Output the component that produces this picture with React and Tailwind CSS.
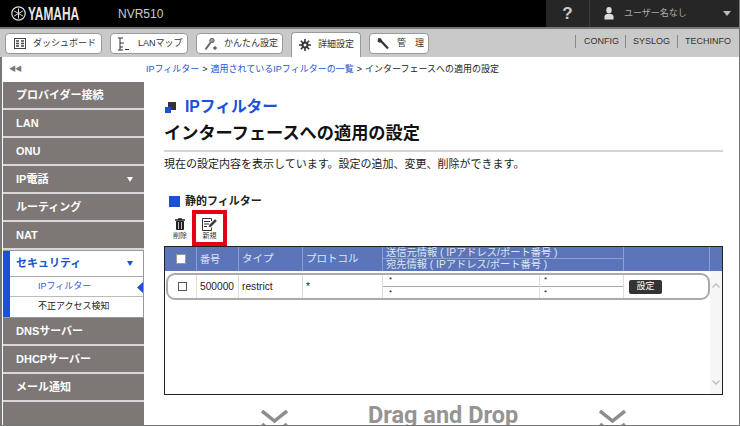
import React from "react";

const F = { fontFamily: '"Liberation Sans","Noto Sans CJK JP",sans-serif' };

function Tab({ icon, label, w, active }) {
  return (
    <div
      className={`flex items-center border border-[#999] rounded-[4px] shrink-0 ${active ? "h-[25px] mt-[3px] rounded-b-none border-b-0 bg-white" : "h-[21px] mt-[4px] bg-white"} ${w}`}
    >
      {icon}
      <span className="text-[9px] text-[#333] whitespace-pre">{label}</span>
    </div>
  );
}

function Nav({ label, arrow }) {
  return (
    <div className="h-[28px] bg-[#7d7775] border-b-2 border-[#d8d6d6] flex items-center pl-[13px] pr-[11px] justify-between shrink-0">
      <span className="text-[11px] font-bold text-white">{label}</span>
      {arrow && <span className="w-0 h-0 border-x-[3px] border-x-transparent border-t-[5px] border-t-white" />}
    </div>
  );
}

function Chevrons({ cls }) {
  return (
    <svg width="27" height="22" viewBox="0 0 27 22" className={`shrink-0 ${cls}`} fill="none" stroke="#8c8c8c" strokeWidth="3.500">
      <path d="M1 1l12.500 10L26 1" />
      <path d="M1 14l12.500 10L26 14" />
    </svg>
  );
}

export default function App() {
  return (
    <div style={F} className="w-[740px] h-[426px] overflow-hidden bg-white flex flex-col border-r border-b border-[#777]">
      {/* top bar */}
      <div className="h-[27px] bg-black flex items-center shrink-0">
        <svg width="15" height="15" viewBox="0 0 15 15" className="ml-[11px] shrink-0" fill="none" stroke="#ddd">
          <circle cx="7.500" cy="7.500" r="6.700" strokeWidth="1.200" />
          <path d="M7.500 2.500v10M3.200 5l8.600 5M11.800 5l-8.600 5" strokeWidth="1" />
        </svg>
        <span className="w-[90px] ml-[2px] shrink-0 block">
          <span className="block text-[18px] leading-[20px] font-bold text-[#e6e6e6] scale-x-[0.66] origin-left">YAMAHA</span>
        </span>
        <span className="text-[12px] text-[#ccc]">NVR510</span>
        <div className="flex-1" />
        <div className="w-[44px] h-full bg-[#262626] flex items-center justify-center border-r border-[#3c3c3c] shrink-0">
          <span className="text-[17px] font-bold text-[#ccc]">?</span>
        </div>
        <div className="w-[149px] h-full bg-[#262626] flex items-center pl-[14px] shrink-0">
          <svg width="10" height="13" viewBox="0 0 10 13" fill="#ddd" className="shrink-0">
            <ellipse cx="5" cy="3.200" rx="2.700" ry="3.200" />
            <path d="M0.500 12.500V9Q1 7.300 3 7h4Q9 7.300 9.500 9v3.500z" />
          </svg>
          <span className="text-[9px] text-[#aaa] ml-[10px] whitespace-nowrap">ユーザー名なし</span>
          <span className="ml-[36px] w-0 h-0 border-x-[4px] border-x-transparent border-t-[5px] border-t-[#bbb]" />
        </div>
      </div>
      <div className="h-[2px] bg-[#777] shrink-0" />
      {/* tab bar */}
      <div className="h-[28px] bg-[#c9c9c9] flex items-start pl-[5px] gap-[8px] shrink-0">
        <Tab
          w="w-[97px]"
          label="ダッシュボード"
          icon={
            <svg width="12" height="11" viewBox="0 0 12 11" className="ml-[8px] mr-[7px]" fill="none" stroke="#444">
              <rect x="0.500" y="0.500" width="11" height="10" />
              <path d="M2 3h3M7 3h3M2 5.500h3M7 5.500h3M2 8h3M7 8h3" strokeWidth="1.300" />
            </svg>
          }
        />
        <Tab
          w="w-[78px]"
          label="LANマップ"
          icon={
            <svg width="12" height="14" viewBox="0 0 12 14" className="ml-[6px] mr-[9px]" fill="none" stroke="#333">
              <path d="M1 1h5M3 1v12M1 13h5M3 6h4M3 10h3M8 12.500h4" />
            </svg>
          }
        />
        <Tab
          w="w-[87px]"
          label="かんたん設定"
          icon={
            <svg width="14" height="14" viewBox="0 0 14 14" className="ml-[7px] mr-[6px]" fill="none" stroke="#666">
              <circle cx="8" cy="3.500" r="2.200" fill="#999" />
              <path d="M6.500 5.500L1.500 12.500" strokeWidth="2" />
              <path d="M9 11h4M11 9v4" stroke="#333" />
            </svg>
          }
        />
        <Tab
          w="w-[70px]"
          active
          label="詳細設定"
          icon={
            <svg width="12" height="12" viewBox="0 0 12 12" className="ml-[7px] mr-[7px]" fill="none" stroke="#333">
              <circle cx="6" cy="6" r="2.500" strokeWidth="2" />
              <path d="M6 0v3M6 9v3M0 6h3M9 6h3M1.800 1.800l2 2M8.200 8.200l2 2M10.200 1.800l-2 2M3.800 8.200l-2 2" strokeWidth="1.600" />
            </svg>
          }
        />
        <Tab
          w="w-[60px]"
          label="管　理"
          icon={
            <svg width="12" height="13" viewBox="0 0 12 13" className="ml-[7px] mr-[8px]" fill="none" stroke="#333">
              <path d="M1.500 1.500l2.200 0.300 0.800 2.200-1.300 1.300-2.200-0.800z" fill="#333" />
              <path d="M3.500 3.500L11 11.500" strokeWidth="2.200" />
            </svg>
          }
        />
        <div className="flex-1" />
        <div className="flex items-center h-[11px] mt-[7px] text-[9px] text-[#333] mr-[8px]">
          <span className="border-l border-[#888] pl-[8px] pr-[6px]">CONFIG</span>
          <span className="border-l border-[#888] pl-[7px] pr-[7px]">SYSLOG</span>
          <span className="border-l border-[#888] pl-[7px]">TECHINFO</span>
        </div>
      </div>
      {/* body */}
      <div className="flex flex-1 min-h-0 border-l-2 border-[#777]">
        {/* sidebar */}
        <div className="w-[141px] ml-[1px] flex flex-col shrink-0">
          <div className="h-[25px] pl-[6px] flex items-center text-[7px] text-[#777] tracking-[-1px] shrink-0">◀◀</div>
          <Nav label="プロバイダー接続" />
          <Nav label="LAN" />
          <Nav label="ONU" />
          <Nav label="IP電話" arrow />
          <Nav label="ルーティング" />
          <Nav label="NAT" />
          <div className="h-[68px] flex shrink-0 border-t border-b border-[#999] relative">
            <div className="w-[7px] bg-[#1b50d9]" />
            <div className="flex-1 flex flex-col">
              <div className="h-[26px] flex items-center justify-between pl-[6px] pr-[11px] border-b border-[#aaa]">
                <span className="text-[11px] font-bold text-[#1b50d9]">セキュリティ</span>
                <span className="w-0 h-0 border-x-[3px] border-x-transparent border-t-[5px] border-t-[#1b50d9]" />
              </div>
              <div className="h-[20px] flex items-center pl-[28px] text-[9px] text-[#2a5fd0] border-b border-[#bbb]">IPフィルター</div>
              <div className="h-[19px] flex items-center pl-[28px] text-[9px] text-[#222]">不正アクセス検知</div>
            </div>
            <div className="absolute right-0 top-[30px] w-[7px] h-[13px] bg-[#1b50d9] [clip-path:polygon(100%_0,100%_100%,0_50%)]" />
            <div className="absolute right-0 top-0 bottom-0 w-px bg-[#999]" />
          </div>
          <Nav label="DNSサーバー" />
          <Nav label="DHCPサーバー" />
          <Nav label="メール通知" />
          <div className="flex-1 bg-[#7d7775]" />
        </div>
        {/* main */}
        <div className="flex-1 min-w-0 flex flex-col">
          <div className="h-[26px] flex items-center pl-[2px] text-[9px] text-[#222] shrink-0 whitespace-nowrap">
            <span className="text-[#1b50d9]">IPフィルター</span>
            <span className="mx-[3px]">&gt;</span>
            <span className="text-[#1b50d9]">適用されているIPフィルターの一覧</span>
            <span className="mx-[3px]">&gt;</span>
            <span>インターフェースへの適用の設定</span>
          </div>
          <div className="pl-[20px] pr-[16px] flex flex-col flex-1 min-h-0">
            <div className="flex items-center h-[20px] mt-[14px] shrink-0">
              <span className="relative block w-[11px] h-[11px] ml-[1px]">
                <span className="absolute right-0 top-0 w-[8px] h-[8px] bg-[#333]" />
                <span className="absolute left-0 bottom-0 w-[6px] h-[6px] bg-[#1b50d9]" />
              </span>
              <span className="text-[15.700px] font-bold text-[#1b50d9] ml-[9px]">IPフィルター</span>
            </div>
            <div className="text-[17.200px] font-bold text-[#111] h-[25px] mt-[4px] leading-[25px] whitespace-nowrap shrink-0">インターフェースへの適用の設定</div>
            <div className="h-[2px] bg-[#d4d4d4] mt-[4px] shrink-0" />
            <div className="text-[11px] text-[#222] mt-[4px] h-[16px] leading-[16px] whitespace-nowrap shrink-0">現在の設定内容を表示しています。設定の追加、変更、削除ができます。</div>
            <div className="flex items-center h-[16px] mt-[21px] pl-[5px] shrink-0">
              <span className="w-[11px] h-[11px] bg-[#1b50d9]" />
              <span className="text-[11px] font-bold text-[#222] ml-[5px]">静的フィルター</span>
            </div>
            <div className="flex h-[36px] mt-[1px] pl-[4px] items-stretch shrink-0">
              <div className="w-[24px] flex flex-col items-center pt-[8px]">
                <svg width="10" height="12" viewBox="0 0 10 12" fill="none" stroke="#222">
                  <path d="M0 2h10M3 1h4" strokeWidth="1.500" />
                  <path d="M1.500 3.500h7V11.500h-7z" fill="#222" />
                  <path d="M3.500 4v7M6.500 4v7" stroke="#fff" strokeWidth="0.700" />
                </svg>
                <span className="text-[7px] leading-[10px] mt-[1px] text-[#333]">削除</span>
              </div>
              <div className="w-[35px] border-[4px] border-[#e60012] flex flex-col items-center pt-[4px]">
                <svg width="15" height="13" viewBox="0 0 15 13" className="shrink-0" fill="none" stroke="#333">
                  <path d="M9.500 9.500v3h-9v-12h9v2.500M2 3.500h6M2 6h5M2 8.500h3" />
                  <path d="M7 9l.500-2 5.500-5.500 1.500 1.500L9 8.500z" fill="#333" strokeWidth="0.500" />
                </svg>
                <span className="text-[7px] leading-[10px] text-[#333]">新規</span>
              </div>
            </div>
            {/* table */}
            <div className="h-[149px] shrink-0 border border-[#222] bg-white flex flex-col">
              <div className="h-[24px] bg-[#5b75b8] flex text-[#dfe5f5] text-[10.500px] shrink-0">
                <div className="w-[32px] border-r border-[#8da0d0] flex items-center justify-center pl-[1px]">
                  <span className="block w-[10px] h-[10px] bg-white border border-[#999]" />
                </div>
                <div className="w-[42px] border-r border-[#8da0d0] flex items-center pl-[3px] text-[10px]">番号</div>
                <div className="w-[64px] border-r border-[#8da0d0] flex items-center pl-[3px]">タイプ</div>
                <div className="w-[80px] border-r border-[#8da0d0] flex items-center pl-[3px]">プロトコル</div>
                <div className="w-[241px] border-r border-[#8da0d0] flex flex-col text-[10.250px] whitespace-nowrap leading-[11px]">
                  <div className="h-[11px] pl-[3px]">送信元情報 ( IPアドレス/ポート番号 )</div>
                  <div className="h-px bg-[#8da0d0] shrink-0" />
                  <div className="h-[12px] pl-[3px]">宛先情報 ( IPアドレス/ポート番号 )</div>
                </div>
                <div className="w-[86px] border-r border-[#8da0d0]" />
                <div className="flex-1" />
              </div>
              <div className="flex-1 flex min-h-0">
                <div className="flex-1 pt-[2px] pl-[1px]">
                  <div className="h-[27px] w-[544px] border-2 border-[#aaa] rounded-[9px] flex text-[10.200px] text-[#222] bg-white">
                    <div className="w-[29px] border-r border-[#ddd] flex items-center justify-center pl-[1px]">
                      <span className="block w-[9px] h-[9px] border border-[#555]" />
                    </div>
                    <div className="w-[42px] border-r border-[#ddd] flex items-center pl-[3px]">500000</div>
                    <div className="w-[64px] border-r border-[#ddd] flex items-center pl-[3px]">restrict</div>
                    <div className="w-[80px] border-r border-[#ddd] flex items-center pl-[3px]">*</div>
                    <div className="w-[157px] border-r border-[#ddd] flex flex-col">
                      <div className="h-[12px] border-b border-[#aaa] pl-[6px] text-[8px] leading-[10px]">*</div>
                      <div className="flex-1 pl-[6px] text-[8px] leading-[11px]">*</div>
                    </div>
                    <div className="w-[84px] border-r border-[#ddd] flex flex-col">
                      <div className="h-[12px] border-b border-[#aaa] pl-[4px] text-[8px] leading-[10px]">*</div>
                      <div className="flex-1 pl-[4px] text-[8px] leading-[11px]">*</div>
                    </div>
                    <div className="flex-1 flex items-center pl-[5px]">
                      <span className="w-[33px] h-[14px] bg-[#333] rounded-[2px] text-white text-[9px] flex items-center justify-center">設定</span>
                    </div>
                  </div>
                </div>
                <div className="w-[12px] bg-[#f6f6f6] flex flex-col justify-between items-center pt-[12px] pb-[9px] shrink-0">
                  <svg width="8" height="5" viewBox="0 0 8 5" fill="none" stroke="#bbb"><path d="M0.500 4.500L4 1l3.500 3.500" strokeWidth="1.300" /></svg>
                  <svg width="8" height="5" viewBox="0 0 8 5" fill="none" stroke="#bbb"><path d="M0.500 0.500L4 4l3.500-3.500" strokeWidth="1.300" /></svg>
                </div>
              </div>
            </div>
            <div className="flex items-start h-[30px] mt-[9px] shrink-0">
              <Chevrons cls="ml-[97px] mt-[6px]" />
              <span className="text-[23.500px] font-bold text-[#949494] ml-[80px] leading-[22px] whitespace-nowrap" style={{ fontFamily: "Roboto,sans-serif" }}>Drag and Drop</span>
              <Chevrons cls="ml-[81px] mt-[6px]" />
            </div>
          </div>
        </div>
      </div>
    </div>
  );
}
